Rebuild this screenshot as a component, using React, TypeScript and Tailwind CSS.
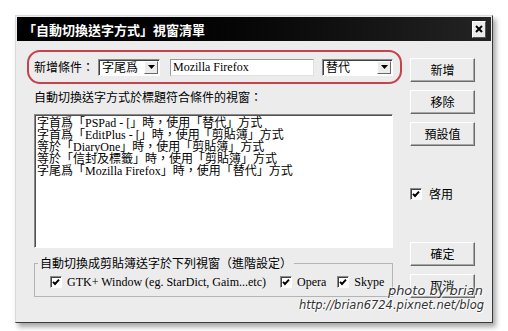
import React from "react";

const serif = "font-['Liberation_Serif','Noto_Sans_CJK_TC',serif]";
const cjk = "font-['Noto_Sans_CJK_TC','Liberation_Sans',sans-serif]";

function Btn({ label }: { label: string }) {
  return (
    <div
      className={`w-[65px] h-[24px] flex items-center justify-center bg-[#ececec] border border-t-white border-l-white border-r-[#6a6a6a] border-b-[#6a6a6a] shadow-[inset_-1px_-1px_0_#a8a8a8] text-[12px] leading-none text-black ${cjk}`}
    >
      {label}
    </div>
  );
}

function Check() {
  return (
    <div className="w-[12px] h-[12px] shrink-0 bg-white border border-t-[#8a8a8a] border-l-[#8a8a8a] border-r-white border-b-white shadow-[inset_1px_1px_0_#404040] flex items-center justify-center">
      <svg width="8" height="8" viewBox="0 0 8 8">
        <path d="M1 3.8 L3 6 L7 1.6" stroke="#000" strokeWidth="1.9" fill="none" />
      </svg>
    </div>
  );
}

function Arrow() {
  return (
    <div className="w-[14px] h-[13px] shrink-0 bg-[#ececec] border border-t-white border-l-white border-r-[#6a6a6a] border-b-[#6a6a6a] flex items-center justify-center">
      <svg width="7" height="4" viewBox="0 0 7 4">
        <path d="M0 0 H7 L3.5 4 Z" fill="#000" />
      </svg>
    </div>
  );
}

function Select({ w, text }: { w: string; text: string }) {
  return (
    <div
      className={`${w} h-[17px] shrink-0 bg-white border border-t-[#8a8a8a] border-l-[#8a8a8a] border-r-white border-b-white shadow-[inset_1px_1px_0_#404040] flex items-center justify-between pl-[3px] pr-[1px] text-[12px] leading-none ${cjk}`}
    >
      <span>{text}</span>
      <Arrow />
    </div>
  );
}

const lines = [
  "字首爲「PSPad - [」時，使用「替代」方式",
  "字首爲「EditPlus - [」時，使用「剪貼簿」方式",
  "等於「DiaryOne」時，使用「剪貼簿」方式",
  "等於「信封及標籤」時，使用「剪貼簿」方式",
  "字尾爲「Mozilla Firefox」時，使用「替代」方式",
];

export default function App() {
  return (
    <div className="relative w-[508px] h-[331px] bg-white overflow-hidden pt-[15px] pl-[15px]">
      {/* window */}
      <div className="w-[478px] h-[308px] bg-[#ececec] border border-t-[#dadada] border-l-[#dadada] border-r-[#3a3a3a] border-b-[#3a3a3a] p-[1px] shadow-[3px_4px_5px_rgba(0,0,0,0.35)] flex flex-col">
        {/* title bar */}
        <div className="h-[24px] shrink-0 bg-gradient-to-r from-black to-[#242424] flex items-center justify-between pl-[6px] pr-[5px]">
          <span className={`text-white text-[13px] font-bold leading-none ${cjk}`}>
            「自動切換送字方式」視窗清單
          </span>
          <div className="w-[14px] h-[17px] bg-[#ececec] border border-t-white border-l-white border-r-[#555] border-b-[#555] flex items-center justify-center">
            <svg width="8" height="8" viewBox="0 0 8 8">
              <path d="M1 1 L7 7 M7 1 L1 7" stroke="#000" strokeWidth="2" />
            </svg>
          </div>
        </div>

        {/* body */}
        <div className="flex flex-row flex-1">
          {/* left column */}
          <div className="ml-[10px] w-[375px] flex flex-col">
            <div className="mt-[9px] h-[34px] w-[375px] border-2 border-[#c4434c] rounded-[13px] flex items-center pl-[5px]">
              <span className={`text-[12px] leading-none w-[60px] ${cjk}`}>新增條件：</span>
              <div className="ml-[4px]">
                <Select w="w-[62px]" text="字尾爲" />
              </div>
              <div
                className={`ml-[10px] w-[144px] h-[17px] bg-white border border-t-[#9a9a9a] border-l-[#9a9a9a] border-r-[#e0e0e0] border-b-[#e0e0e0] flex items-center pl-[2px] text-[12px] leading-none ${serif}`}
              >
                Mozilla Firefox
              </div>
              <div className="ml-[8px]">
                <Select w="w-[71px]" text="替代" />
              </div>
            </div>

            <div className={`mt-[6px] ml-[7px] text-[12px] leading-[14px] ${cjk}`}>
              自動切換送字方式於標題符合條件的視窗：
            </div>

            <div
              className={`mt-[10px] ml-[7px] w-[359px] h-[134px] bg-white border border-t-[#8a8a8a] border-l-[#8a8a8a] border-r-white border-b-white shadow-[inset_1px_1px_0_#505050] pl-[2px] pt-[2px] text-[12px] leading-[12px] ${serif}`}
            >
              {lines.map((l) => (
                <div key={l} className="whitespace-nowrap">
                  {l}
                </div>
              ))}
            </div>

            <fieldset className="mt-[8px] ml-[7px] w-[359px] border border-[#b4b4b4] pt-[5px] pb-[8px]">
              <legend className={`ml-[3px] px-[2px] text-[12px] leading-[14px] ${cjk}`}>
                自動切換成剪貼簿送字於下列視窗（進階設定）
              </legend>
              <div className={`pl-[15px] flex items-center h-[13px] text-[12px] leading-none ${serif}`}>
                <Check />
                <span className="ml-[5px] whitespace-nowrap">GTK+ Window (eg. StarDict, Gaim...etc)</span>
                <div className="ml-[14px]">
                  <Check />
                </div>
                <span className="ml-[5px]">Opera</span>
                <div className="ml-[11px]">
                  <Check />
                </div>
                <span className="ml-[5px]">Skype</span>
              </div>
            </fieldset>
          </div>

          {/* right column */}
          <div className="ml-[8px] w-[65px] flex flex-col">
            <div className="mt-[17px]">
              <Btn label="新增" />
            </div>
            <div className="mt-[8px]">
              <Btn label="移除" />
            </div>
            <div className="mt-[8px]">
              <Btn label="預設值" />
            </div>
            <div className="mt-[41px] h-[13px] flex items-center">
              <Check />
              <span className={`ml-[7px] text-[12px] leading-none ${cjk}`}>啓用</span>
            </div>
            <div className="mt-[42px]">
              <Btn label="確定" />
            </div>
            <div className="mt-[8px]">
              <Btn label="取消" />
            </div>
          </div>
        </div>
      </div>

      {/* watermark */}
      <div className="absolute right-[24px] top-[283px] flex flex-col items-end font-['DejaVu_Sans',sans-serif] text-[#333] [text-shadow:0_0_2px_#fff,0_0_3px_#fff,1px_1px_1px_#fff]">
        <span className="text-[13px] leading-[15px] italic mr-[1px]">photo by brian</span>
        <span className="text-[11.5px] leading-[14px] italic">http://brian6724.pixnet.net/blog</span>
      </div>
    </div>
  );
}
